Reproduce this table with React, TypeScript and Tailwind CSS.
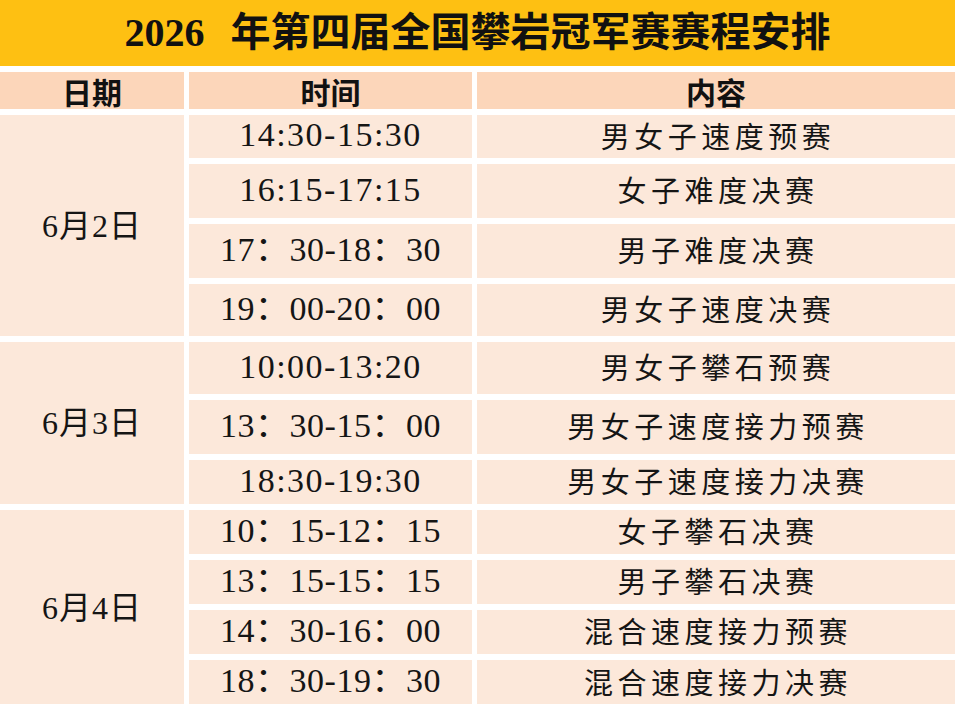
import React from "react";

interface Slot {
  time: string;
  event: string;
}

interface Day {
  date: string;
  span: string;
  slots: Slot[];
}

const days: Day[] = [
  {
    date: "6月2日",
    span: "row-span-4",
    slots: [
      { time: "14:30-15:30", event: "男女子速度预赛" },
      { time: "16:15-17:15", event: "女子难度决赛" },
      { time: "17：30-18：30", event: "男子难度决赛" },
      { time: "19：00-20：00", event: "男女子速度决赛" },
    ],
  },
  {
    date: "6月3日",
    span: "row-span-3",
    slots: [
      { time: "10:00-13:20", event: "男女子攀石预赛" },
      { time: "13：30-15：00", event: "男女子速度接力预赛" },
      { time: "18:30-19:30", event: "男女子速度接力决赛" },
    ],
  },
  {
    date: "6月4日",
    span: "row-span-4",
    slots: [
      { time: "10：15-12：15", event: "女子攀石决赛" },
      { time: "13：15-15：15", event: "男子攀石决赛" },
      { time: "14：30-16：00", event: "混合速度接力预赛" },
      { time: "18：30-19：30", event: "混合速度接力决赛" },
    ],
  },
];

const serif = "font-['Liberation_Serif','Noto_Sans_CJK_SC',serif]";
const cjk = "font-['Noto_Sans_CJK_SC',sans-serif]";
const cell = "bg-[#fce8da] flex items-center justify-center text-[#151515]";

export default function App() {
  return (
    <div className="w-[960px] h-[704px] overflow-hidden bg-white">
      <div className="w-[955px]">
        {/* title */}
        <div className={`h-[66px] bg-[#fec012] flex items-center justify-center text-[40px] font-bold text-[#111] ${serif}`}>
          <span>2026</span>
          <span className="ml-[26px]">年第四届全国攀岩冠军赛赛程安排</span>
        </div>

        <div className="mt-[6px] grid grid-cols-[184px_283px_478px] grid-rows-[37px_43px_54px_54px_52px_52px_54px_44px_44px_44px_44px_45px] gap-x-[5px] gap-y-[6px]">
          {/* header */}
          {["日期", "时间", "内容"].map((h) => (
            <div
              key={h}
              className={`bg-[#fcd6ba] flex items-center justify-center text-[30px] font-bold leading-none text-[#111] ${cjk}`}
            >
              {h}
            </div>
          ))}

          {days.map((d) => (
            <React.Fragment key={d.date}>
              <div className={`${d.span} ${cell} text-[32px] leading-none tracking-[1px] ${serif}`}>
                {d.date}
              </div>
              {d.slots.map((s) => (
                <React.Fragment key={s.time}>
                  <div
                    className={`${cell} text-[34px] leading-none pb-[3px] ${serif} ${
                      s.time.includes("：") ? "tracking-[0.5px]" : "tracking-[1.5px]"
                    }`}
                  >
                    {s.time}
                  </div>
                  <div className={`${cell} text-[29px] leading-none tracking-[4.5px] pl-[4px] pb-[3px] ${cjk}`}>
                    {s.event}
                  </div>
                </React.Fragment>
              ))}
            </React.Fragment>
          ))}
        </div>
      </div>
    </div>
  );
}
